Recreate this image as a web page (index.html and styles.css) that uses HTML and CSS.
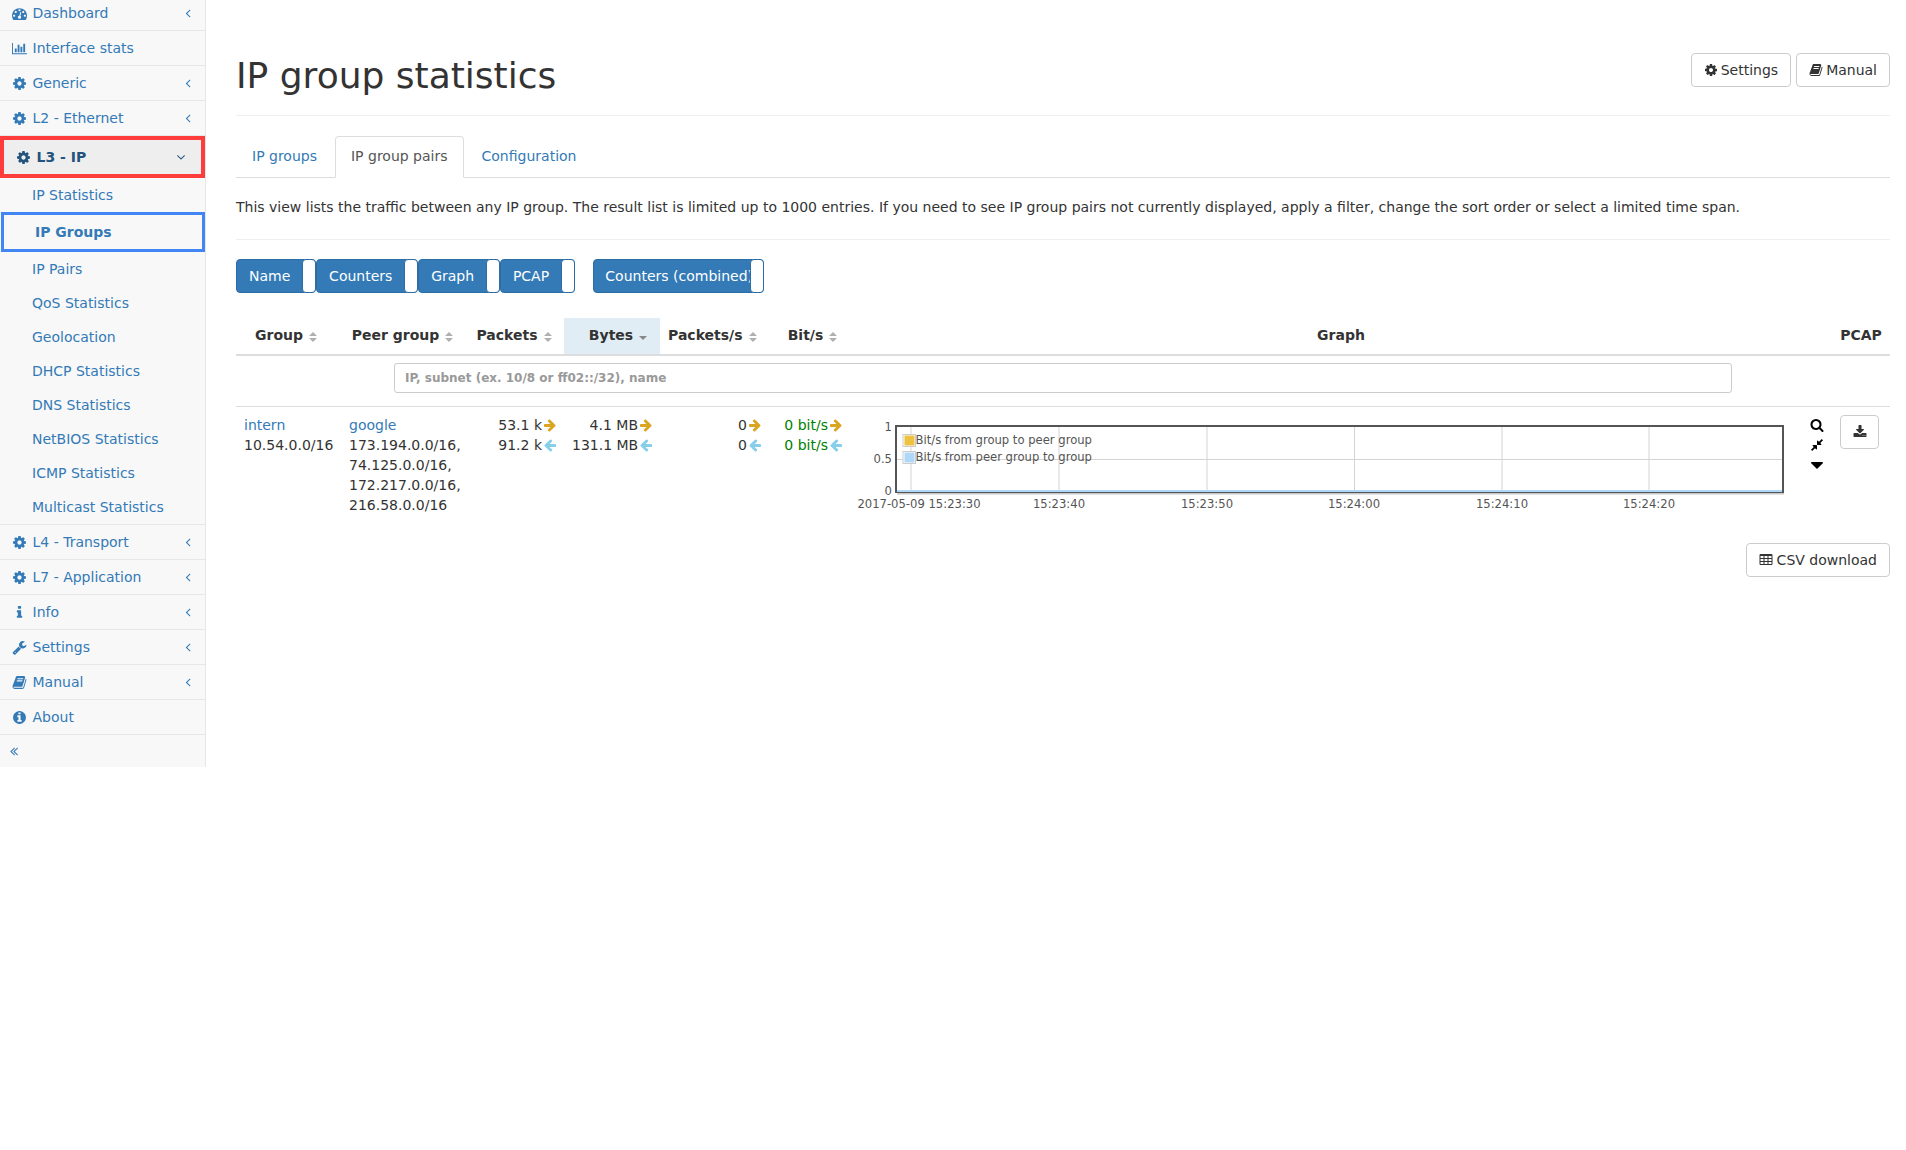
FILE: index.html
```html
<!DOCTYPE html>
<html lang="en">
<head>
<meta charset="utf-8">
<title>IP group statistics</title>
<link rel="stylesheet" href="styles.css">
</head>
<body>
<svg class="defs" aria-hidden="true">
<symbol id="cog" viewBox="0 0 1792 1792"><path d="M1152 896q0-106-75-181t-181-75-181 75-75 181 75 181 181 75 181-75 75-181zm512-109v222q0 12-8 23t-20 13l-185 28q-19 54-39 91 35 50 107 138 10 12 10 25t-9 23q-27 37-99 108t-94 71q-12 0-26-9l-138-108q-44 23-91 38-16 136-29 186-7 28-36 28h-222q-14 0-24.5-8.5t-11.5-21.5l-28-184q-49-16-90-37l-141 107q-10 9-25 9-14 0-25-11-126-114-165-168-7-10-7-23 0-12 8-23 15-21 51-66.5t54-70.5q-27-50-41-99l-183-27q-13-2-21-12.5t-8-23.5v-222q0-12 8-23t19-13l186-28q14-46 39-92-40-57-107-138-10-12-10-24 0-10 9-23 26-36 98.5-107.5t94.5-71.5q13 0 26 10l138 107q44-23 91-38 16-136 29-186 7-28 36-28h222q14 0 24.5 8.5t11.5 21.5l28 184q49 16 90 37l142-107q9-9 24-9 13 0 25 10 129 119 165 170 7 8 7 22 0 12-8 23-15 21-51 66.5t-54 70.5q26 50 41 98l183 28q13 2 21 12.5t8 23.5z"/></symbol>
<symbol id="tach" viewBox="0 0 1792 1792"><path d="M384 1152q0-53-37.5-90.5t-90.5-37.5-90.5 37.5-37.5 90.5 37.5 90.5 90.5 37.5 90.5-37.5 37.5-90.5zm192-448q0-53-37.5-90.5t-90.5-37.5-90.5 37.5-37.5 90.5 37.5 90.5 90.5 37.5 90.5-37.5 37.5-90.5zm428 481l101-382q6-26-7.5-48.5t-38.5-29.5-48 6.5-30 39.5l-101 382q-60 5-107 43.5t-63 98.5q-20 77 20 146t117 89 146-20 89-117q16-60-6-117t-72-91zm660-33q0-53-37.5-90.5t-90.5-37.5-90.5 37.5-37.5 90.5 37.5 90.5 90.5 37.5 90.5-37.5 37.5-90.5zm-640-640q0-53-37.5-90.5t-90.5-37.5-90.5 37.5-37.5 90.5 37.5 90.5 90.5 37.5 90.5-37.5 37.5-90.5zm448 192q0-53-37.5-90.5t-90.5-37.5-90.5 37.5-37.5 90.5 37.5 90.5 90.5 37.5 90.5-37.5 37.5-90.5zm320 448q0 261-141 483-19 29-54 29h-1402q-35 0-54-29-141-221-141-483 0-182 71-348t191-286 286-191 348-71 348 71 286 191 191 286 71 348z"/></symbol>
<symbol id="chart" viewBox="0 0 2048 1792"><path d="M640 896v512h-256v-512h256zm384-512v1024h-256v-1024h256zm1024 1152v128h-2048v-1536h128v1408h1920zm-640-896v768h-256v-768h256zm384-384v1152h-256v-1152h256z"/></symbol>
<symbol id="info" viewBox="0 0 1792 1792"><path d="M1216 1344v128q0 26-19 45t-45 19h-512q-26 0-45-19t-19-45v-128q0-26 19-45t45-19h64v-384h-64q-26 0-45-19t-19-45v-128q0-26 19-45t45-19h384q26 0 45 19t19 45v576h64q26 0 45 19t19 45zm-128-1152v192q0 26-19 45t-45 19h-256q-26 0-45-19t-19-45v-192q0-26 19-45t45-19h256q26 0 45 19t19 45z"/></symbol>
<symbol id="wrench" viewBox="0 0 1792 1792"><path d="M448 1472q0-26-19-45t-45-19-45 19-19 45 19 45 45 19 45-19 19-45zm644-420l-682 682q-37 37-90 37-52 0-91-37l-106-108q-38-36-38-90 0-53 38-91l681-681q39 98 114.5 173.5t173.5 114.5zm634-435q0 39-23 106-47 134-164.5 217.5t-258.5 83.5q-185 0-316.5-131.5t-131.5-316.5 131.5-316.5 316.5-131.5q58 0 121.5 16.5t107.5 46.5q16 11 16 28t-16 28l-293 169v224l193 107q5-3 79-48.5t135.5-81 70.5-35.5q15 0 23.5 10t8.5 25z"/></symbol>
<symbol id="book" viewBox="0 0 1792 1792"><path d="M1703 478q40 57 18 129l-275 906q-19 64-76.5 107.5t-122.5 43.5h-923q-77 0-148.5-53.5t-99.5-131.5q-24-67-2-127 0-4 3-27t4-37q1-8-3-21.5t-3-19.5q2-11 8-21t16.5-23.5 16.5-23.5q23-38 45-91.5t30-91.5q3-10 .5-30t-.5-28q3-11 17-28t17-23q21-36 42-92t25-90q1-9-2.5-32t.5-28q4-13 22-30.5t22-22.5q19-26 42.5-84.5t27.5-96.5q1-8-3-25.5t-2-26.5q2-8 9-18t18-23 17-21q8-12 16.5-30.5t15-35 16-36 19.5-32 26.5-23.5 36-11.5 47.5 5.5l-1 3q38-9 51-9h761q74 0 114 56t18 130l-274 906q-36 119-71.5 153.5t-128.5 34.5h-869q-27 0-38 15-11 16-1 43 24 70 144 70h923q29 0 56-15.5t35-41.5l300-987q7-22 5-57 38 15 59 43zm-1064 2q-4 13 2 22.5t20 9.5h608q13 0 25.5-9.5t16.5-22.5l21-64q4-13-2-22.5t-20-9.5h-608q-13 0-25.5 9.5t-16.5 22.5zm-83 256q-4 13 2 22.5t20 9.5h608q13 0 25.5-9.5t16.5-22.5l21-64q4-13-2-22.5t-20-9.5h-608q-13 0-25.5 9.5t-16.5 22.5z"/></symbol>
<symbol id="infoc" viewBox="0 0 1792 1792"><path d="M1152 1376v-160q0-14-9-23t-23-9h-96v-512q0-14-9-23t-23-9h-320q-14 0-23 9t-9 23v160q0 14 9 23t23 9h96v320h-96q-14 0-23 9t-9 23v160q0 14 9 23t23 9h448q14 0 23-9t9-23zm-128-896v-160q0-14-9-23t-23-9h-192q-14 0-23 9t-9 23v160q0 14 9 23t23 9h192q14 0 23-9t9-23zm640 416q0 209-103 385.5t-279.5 279.5-385.5 103-385.5-103-279.5-279.5-103-385.5 103-385.5 279.5-279.5 385.5-103 385.5 103 279.5 279.5 103 385.5z"/></symbol>
<symbol id="aleft" viewBox="0 0 1792 1792"><path d="M1203 544q0 13-10 23l-393 393 393 393q10 10 10 23t-10 23l-50 50q-10 10-23 10t-23-10l-466-466q-10-10-10-23t10-23l466-466q10-10 23-10t23 10l50 50q10 10 10 23z"/></symbol>
<symbol id="adown" viewBox="0 0 1792 1792"><path d="M1395 736q0 13-10 23l-466 466q-10 10-23 10t-23-10l-466-466q-10-10-10-23t10-23l50-50q10-10 23-10t23 10l393 393 393-393q10-10 23-10t23 10l50 50q10 10 10 23z"/></symbol>
<symbol id="adleft" viewBox="0 0 1792 1792"><path d="M1011 1376q0 13-10 23l-50 50q-10 10-23 10t-23-10l-466-466q-10-10-10-23t10-23l466-466q10-10 23-10t23 10l50 50q10 10 10 23t-10 23l-393 393 393 393q10 10 10 23zm384 0q0 13-10 23l-50 50q-10 10-23 10t-23-10l-466-466q-10-10-10-23t10-23l466-466q10-10 23-10t23 10l50 50q10 10 10 23t-10 23l-393 393 393 393q10 10 10 23z"/></symbol>
<symbol id="aright" viewBox="0 0 1792 1792"><path d="M1600 960q0 54-37 91l-651 651q-39 37-91 37-51 0-90-37l-75-75q-38-38-38-91t38-91l293-293h-704q-52 0-84.5-37.5t-32.5-90.5v-128q0-53 32.5-90.5t84.5-37.5h704l-293-294q-38-36-38-90t38-90l75-75q38-38 90-38 53 0 91 38l651 651q37 35 37 90z"/></symbol>
<symbol id="arleft" viewBox="0 0 1792 1792"><path d="M1664 896v128q0 53-32.5 90.5t-84.5 37.5h-704l293 294q38 36 38 90t-38 90l-75 76q-37 37-90 37-52 0-91-37l-651-652q-37-37-37-90 0-52 37-91l651-650q38-38 91-38 52 0 90 38l75 74q38 38 38 91t-38 91l-293 293h704q52 0 84.5 37.5t32.5 90.5z"/></symbol>
<symbol id="search" viewBox="0 0 1792 1792"><path d="M1216 832q0-185-131.5-316.5t-316.5-131.5-316.5 131.5-131.5 316.5 131.5 316.5 316.5 131.5 316.5-131.5 131.5-316.5zm512 832q0 52-38 90t-90 38q-54 0-90-38l-343-342q-179 124-399 124-143 0-273.5-55.5t-225-150-150-225-55.5-273.5 55.5-273.5 150-225 225-150 273.5-55.5 273.5 55.5 225 150 150 225 55.5 273.5q0 220-124 399l343 343q37 37 37 90z"/></symbol>
<symbol id="compress" viewBox="0 0 1792 1792"><path d="M896 960v448q0 26-19 45t-45 19-45-19l-144-144-332 332q-10 10-23 10t-23-10l-114-114q-10-10-10-23t10-23l332-332-144-144q-19-19-19-45t19-45 45-19h448q26 0 45 19t19 45zm755-672q0 13-10 23l-332 332 144 144q19 19 19 45t-19 45-45 19h-448q-26 0-45-19t-19-45v-448q0-26 19-45t45-19 45 19l144 144 332-332q10-10 23-10t23 10l114 114q10 10 10 23z"/></symbol>
<symbol id="caret" viewBox="298 298 1195 1195"><path d="M1408 704q0 26-19 45l-448 448q-19 19-45 19t-45-19l-448-448q-19-19-19-45t19-45 45-19h896q26 0 45 19t19 45z"/></symbol>
<symbol id="download" viewBox="0 0 1792 1792"><path d="M1344 1344q0-26-19-45t-45-19-45 19-19 45 19 45 45 19 45-19 19-45zm256 0q0-26-19-45t-45-19-45 19-19 45 19 45 45 19 45-19 19-45zm128-224v320q0 40-28 68t-68 28h-1472q-40 0-68-28t-28-68v-320q0-40 28-68t68-28h465l135 136q58 56 136 56t136-56l136-136h464q40 0 68 28t28 68zm-325-569q17 41-14 70l-448 448q-18 19-45 19t-45-19l-448-448q-31-29-14-70 17-39 59-39h256v-448q0-26 19-45t45-19h256q26 0 45 19t19 45v448h256q42 0 59 39z"/></symbol>
<symbol id="table" viewBox="0 0 1792 1792"><path d="M576 1376v-192q0-14-9-23t-23-9h-320q-14 0-23 9t-9 23v192q0 14 9 23t23 9h320q14 0 23-9t9-23zm0-384v-192q0-14-9-23t-23-9h-320q-14 0-23 9t-9 23v192q0 14 9 23t23 9h320q14 0 23-9t9-23zm512 384v-192q0-14-9-23t-23-9h-320q-14 0-23 9t-9 23v192q0 14 9 23t23 9h320q14 0 23-9t9-23zm-512-768v-192q0-14-9-23t-23-9h-320q-14 0-23 9t-9 23v192q0 14 9 23t23 9h320q14 0 23-9t9-23zm512 384v-192q0-14-9-23t-23-9h-320q-14 0-23 9t-9 23v192q0 14 9 23t23 9h320q14 0 23-9t9-23zm512 384v-192q0-14-9-23t-23-9h-320q-14 0-23 9t-9 23v192q0 14 9 23t23 9h320q14 0 23-9t9-23zm-512-768v-192q0-14-9-23t-23-9h-320q-14 0-23 9t-9 23v192q0 14 9 23t23 9h320q14 0 23-9t9-23zm512 384v-192q0-14-9-23t-23-9h-320q-14 0-23 9t-9 23v192q0 14 9 23t23 9h320q14 0 23-9t9-23zm0-384v-192q0-14-9-23t-23-9h-320q-14 0-23 9t-9 23v192q0 14 9 23t23 9h320q14 0 23-9t9-23zm128-320v1088q0 66-47 113t-113 47h-1344q-66 0-113-47t-47-113v-1088q0-66 47-113t113-47h1344q66 0 113 47t47 113z"/></symbol>
<symbol id="sort" viewBox="0 0 8 12"><path d="M4 1l4 4H0zM4 11L0 7h8z"/></symbol>
<symbol id="sortd" viewBox="0 0 8 12"><path d="M0 5h8l-4 4z"/></symbol>
</svg>

<div class="page">
<aside class="sidebar">
<ul class="menu">
<li class="item"><a class="link" href="#"><svg class="ico"><use href="#tach"/></svg><span class="label">Dashboard</span><svg class="chev"><use href="#aleft"/></svg></a></li>
<li class="item"><a class="link" href="#"><svg class="ico"><use href="#chart"/></svg><span class="label">Interface stats</span></a></li>
<li class="item"><a class="link" href="#"><svg class="ico"><use href="#cog"/></svg><span class="label">Generic</span><svg class="chev"><use href="#aleft"/></svg></a></li>
<li class="item"><a class="link" href="#"><svg class="ico"><use href="#cog"/></svg><span class="label">L2 - Ethernet</span><svg class="chev"><use href="#aleft"/></svg></a></li>
<li class="item item-open">
<a class="link link-active" href="#"><svg class="ico"><use href="#cog"/></svg><span class="label">L3 - IP</span><svg class="chev"><use href="#adown"/></svg></a>
<ul class="submenu">
<li><a class="sublink" href="#">IP Statistics</a></li>
<li><a class="sublink sublink-active" href="#">IP Groups</a></li>
<li><a class="sublink" href="#">IP Pairs</a></li>
<li><a class="sublink" href="#">QoS Statistics</a></li>
<li><a class="sublink" href="#">Geolocation</a></li>
<li><a class="sublink" href="#">DHCP Statistics</a></li>
<li><a class="sublink" href="#">DNS Statistics</a></li>
<li><a class="sublink" href="#">NetBIOS Statistics</a></li>
<li><a class="sublink" href="#">ICMP Statistics</a></li>
<li><a class="sublink" href="#">Multicast Statistics</a></li>
</ul>
</li>
<li class="item"><a class="link" href="#"><svg class="ico"><use href="#cog"/></svg><span class="label">L4 - Transport</span><svg class="chev"><use href="#aleft"/></svg></a></li>
<li class="item"><a class="link" href="#"><svg class="ico"><use href="#cog"/></svg><span class="label">L7 - Application</span><svg class="chev"><use href="#aleft"/></svg></a></li>
<li class="item"><a class="link" href="#"><svg class="ico"><use href="#info"/></svg><span class="label">Info</span><svg class="chev"><use href="#aleft"/></svg></a></li>
<li class="item"><a class="link" href="#"><svg class="ico"><use href="#wrench"/></svg><span class="label">Settings</span><svg class="chev"><use href="#aleft"/></svg></a></li>
<li class="item"><a class="link" href="#"><svg class="ico"><use href="#book"/></svg><span class="label">Manual</span><svg class="chev"><use href="#aleft"/></svg></a></li>
<li class="item"><a class="link" href="#"><svg class="ico"><use href="#infoc"/></svg><span class="label">About</span></a></li>
<li class="collapse-row"><a class="link" href="#"><svg class="collapse-ico"><use href="#adleft"/></svg></a></li>
</ul>
</aside>

<main class="main">
<header class="page-header">
<h1 class="title">IP group statistics</h1>
<div class="header-actions">
<a class="btn" href="#"><svg class="btn-ico ico-gear"><use href="#cog"/></svg>Settings</a>
<a class="btn" href="#"><svg class="btn-ico ico-book"><use href="#book"/></svg>Manual</a>
</div>
</header>

<nav class="tabs">
<a class="tab" href="#">IP groups</a>
<a class="tab tab-active" href="#">IP group pairs</a>
<a class="tab" href="#">Configuration</a>
</nav>

<p class="intro">This view lists the traffic between any IP group. The result list is limited up to 1000 entries. If you need to see IP group pairs not currently displayed, apply a filter, change the sort order or select a limited time span.</p>

<div class="toggles">
<div class="toggle"><span class="toggle-text">Name</span><span class="knob"></span></div>
<div class="toggle"><span class="toggle-text">Counters</span><span class="knob"></span></div>
<div class="toggle"><span class="toggle-text">Graph</span><span class="knob"></span></div>
<div class="toggle"><span class="toggle-text">PCAP</span><span class="knob"></span></div>
<div class="toggle toggle-combined"><span class="toggle-text">Counters (combined)</span><span class="knob"></span></div>
</div>

<table class="data">
<colgroup>
<col class="c-group"><col class="c-peer"><col class="c-packets"><col class="c-bytes"><col class="c-pps"><col class="c-bps"><col class="c-graph"><col class="c-pcap">
</colgroup>
<thead>
<tr>
<th class="th-group">Group<svg class="sort"><use href="#sort"/></svg></th>
<th>Peer group<svg class="sort"><use href="#sort"/></svg></th>
<th>Packets<svg class="sort"><use href="#sort"/></svg></th>
<th class="sorted">Bytes<svg class="sort sort-active"><use href="#sortd"/></svg></th>
<th class="th-pps">Packets/s<svg class="sort"><use href="#sort"/></svg></th>
<th class="th-bps">Bit/s<svg class="sort"><use href="#sort"/></svg></th>
<th>Graph</th>
<th>PCAP</th>
</tr>
</thead>
<tbody>
<tr class="filter-row">
<td colspan="8"><input class="filter" type="text" placeholder="IP, subnet (ex. 10/8 or ff02::/32), name"></td>
</tr>
<tr class="row">
<td><a href="#">intern</a><br>10.54.0.0/16</td>
<td><a href="#">google</a><br>173.194.0.0/16,<br>74.125.0.0/16,<br>172.217.0.0/16,<br>216.58.0.0/16</td>
<td class="num">53.1 k<svg class="arrow out"><use href="#aright"/></svg><br>91.2 k<svg class="arrow in"><use href="#arleft"/></svg></td>
<td class="num">4.1 MB<svg class="arrow out"><use href="#aright"/></svg><br>131.1 MB<svg class="arrow in"><use href="#arleft"/></svg></td>
<td class="num">0<svg class="arrow out"><use href="#aright"/></svg><br>0<svg class="arrow in"><use href="#arleft"/></svg></td>
<td class="num green">0 bit/s<svg class="arrow out"><use href="#aright"/></svg><br>0 bit/s<svg class="arrow in"><use href="#arleft"/></svg></td>
<td class="graph-cell">
<div class="graph-wrap">
<svg class="plot" width="935" height="100" viewBox="0 0 935 100">
<g class="grid">
<path d="M56 11V77M204 11V77M352 11V77M499.500 11V77M647 11V77M794 11V77M41 44.500H928"/>
</g>
<path class="shadow" d="M42 78.750H929"/>
<rect class="frame" x="41" y="11" width="887" height="66"/>
<path class="series" d="M42 76H927"/>
<g class="ylab">
<text x="37" y="16">1</text>
<text x="37" y="48">0.5</text>
<text x="37" y="80">0</text>
</g>
<g class="xlab">
<text x="64" y="93">2017-05-09 15:23:30</text>
<text x="204" y="93">15:23:40</text>
<text x="352" y="93">15:23:50</text>
<text x="499" y="93">15:24:00</text>
<text x="647" y="93">15:24:10</text>
<text x="794" y="93">15:24:20</text>
</g>
<rect class="sw-box" x="48" y="19.500" width="12.500" height="12"/>
<rect class="sw-a" x="49.500" y="20.500" width="10" height="10"/>
<rect class="sw-box" x="48" y="36.500" width="12.500" height="12"/>
<rect class="sw-b" x="49.500" y="37.500" width="10" height="10"/>
<text class="legend" x="60.500" y="29">Bit/s from group to peer group</text>
<text class="legend" x="60.500" y="46">Bit/s from peer group to group</text>
</svg>
<div class="graph-tools">
<svg class="tool"><use href="#search"/></svg>
<svg class="tool"><use href="#compress"/></svg>
<svg class="tool"><use href="#caret"/></svg>
</div>
</div>
</td>
<td class="pcap-cell"><a class="btn btn-icon" href="#"><svg class="dl"><use href="#download"/></svg></a></td>
</tr>
</tbody>
</table>

<div class="footer-actions">
<a class="btn" href="#"><svg class="btn-ico"><use href="#table"/></svg>CSV download</a>
</div>
</main>
</div>
</body>
</html>
```
FILE: styles.css
```css
* { box-sizing: border-box; }
html, body { margin: 0; padding: 0; background: #fff; }
body { font: 14px/20px "DejaVu Sans", sans-serif; color: #333; }
a { color: #337ab7; text-decoration: none; }
.defs { position: absolute; width: 0; height: 0; }
.page { display: flex; align-items: flex-start; }

.sidebar { flex: none; width: 206px; background: #f8f8f8; border-right: 1px solid #e7e7e7; overflow: hidden; }
.menu, .submenu { list-style: none; margin: 0; padding: 0; }
.menu { margin-top: -4px; }
.item { border-bottom: 1px solid #e7e7e7; }
.link { display: flex; align-items: center; height: 34px; padding-left: 12px; padding-right: 10px; fill: #337ab7; }
.ico { flex: none; width: 15px; height: 15px; margin-right: 5.500px; }
.label { flex: 1; }
.chev { flex: none; width: 14px; height: 14px; fill: #337ab7; }
.link-active { height: 42px; margin-top: 0; border: 4px solid #ff3c3c; background: #eee; color: #23527c; font-weight: bold; padding-left: 12px; padding-right: 13px; fill: #23527c; }
.link-active .chev { fill: #23527c; }
.sublink { display: block; height: 34px; line-height: 34px; padding-left: 32px; }
.sublink-active { height: 40px; line-height: 34px; border: 3px solid #4285f4; margin-left: 1px; padding-left: 31px; font-weight: bold; }
.collapse-row .link { height: 32px; padding-left: 7px; }
.collapse-ico { width: 14px; height: 14px; fill: #337ab7; }

.main { flex: 1; min-width: 0; padding: 0 16px 0 30px; }
.page-header { display: flex; justify-content: space-between; align-items: flex-start; height: 116px; border-bottom: 1px solid #eee; padding-top: 53px; margin-bottom: 20px; }
.title { margin: 3px 0 0; font-size: 36px; line-height: 40px; font-weight: 500; }
.header-actions { display: flex; gap: 5px; }
.btn { display: inline-flex; align-items: center; height: 34px; padding: 0 12px; border: 1px solid #ccc; border-radius: 4px; background: #fff; color: #333; fill: #333; white-space: nowrap; }
.btn-ico { width: 14px; height: 14px; margin-right: 4px; }
.btn-ico.ico-gear { margin-right: 3px; }
.btn-ico.ico-book { margin-right: 3px; }

.tabs { display: flex; gap: 2px; height: 42px; border-bottom: 1px solid #ddd; }
.tab { display: block; height: 42px; padding: 9px 15px; border: 1px solid transparent; border-radius: 4px 4px 0 0; }
.tab-active { border-color: #ddd #ddd #fff; background: #fff; color: #555; }
.intro { margin: 19px 0 22px; padding-bottom: 0; }

.toggles { display: flex; align-items: stretch; height: 55px; border-top: 1px solid #eee; padding-top: 19px; }
.toggle { display: flex; height: 34px; background: #337ab7; border: 1px solid #2e6da4; border-radius: 4px; color: #fff; }
.toggle-text { padding: 6px 12px; white-space: nowrap; overflow: hidden; }
.knob { flex: none; width: 13.800px; margin: -1px -1px -1px 0; background: #fff; border: 1px solid #2e6da4; border-radius: 4px; }
.toggle-combined { width: 171px; margin-left: 18.400px; }
.toggle-combined .toggle-text { flex: 1; padding: 6px 0 6px 11px; }
.toggle-combined .knob { width: 14.500px; }

.data { width: 100%; table-layout: fixed; border-collapse: collapse; margin-top: 24px; }
.c-group { width: 105px; } .c-peer { width: 123px; } .c-packets { width: 100px; } .c-bytes { width: 96px; }
.c-pps { width: 109px; } .c-bps { width: 81px; } .c-pcap { width: 58px; }
.data th { height: 37px; padding: 7px 8px 8px; vertical-align: top; text-align: center; font-weight: bold; border-bottom: 2px solid #ddd; white-space: nowrap; }
.data th.th-group { padding-right: 13px; }
.data th.sorted { background: #e1edf5; padding-left: 20px; }
.data th.th-pps { padding-right: 13px; padding-left: 8px; }
.data th.th-bps { padding-left: 15px; padding-right: 9px; }
.sort { width: 8px; height: 12px; margin-left: 6px; vertical-align: -3px; fill: #b0b0b0; }
.sort-active { fill: #888; }
.filter-row td { height: 51px; padding: 7px 0 13px; text-align: center; border-bottom: 1px solid #ddd; }
.filter { display: block; width: 1338px; height: 30px; margin: 0 auto; padding: 0 10px; border: 1px solid #ccc; border-radius: 3px; font: bold 12px "DejaVu Sans", sans-serif; color: #555; outline: none; }
.filter::placeholder { color: #999; opacity: 1; }
.row td { padding: 8px; vertical-align: top; }
.num { text-align: right; white-space: nowrap; }
.green { color: #008000; }
.arrow { width: 14px; height: 14px; margin: 0 -1px 0 1px; vertical-align: -2px; }
.out { fill: #daa520; }
.in { fill: #87ceeb; }
.data td.graph-cell { padding: 8px 7px 8px 5px; }
.graph-wrap { display: flex; }
.plot { flex: none; display: block; }
.grid path { fill: none; stroke: #d4d4d4; stroke-width: 1; }
.shadow { fill: none; stroke: #c8c8c8; stroke-width: 1.500; }
.series { fill: none; stroke: #afd8f8; stroke-width: 2; }
.frame { fill: none; stroke: #545454; stroke-width: 2; }
.plot text { font: 11.600px "DejaVu Sans", sans-serif; fill: #545454; }
.ylab text { text-anchor: end; }
.xlab text { text-anchor: middle; }
.sw-box { fill: #fff; stroke: #ccc; }
.sw-a { fill: #edc240; }
.sw-b { fill: #afd8f8; }
.graph-tools { display: flex; flex-direction: column; margin-left: 20px; }
.tool { display: block; width: 14px; height: 20px; fill: #000; }
.data td.pcap-cell { padding: 8px; }
.btn-icon { width: 39px; height: 34px; padding: 0; justify-content: center; }
.dl { width: 14px; height: 14px; fill: #333; }
.footer-actions { display: flex; justify-content: flex-end; margin-top: 20px; }
```
